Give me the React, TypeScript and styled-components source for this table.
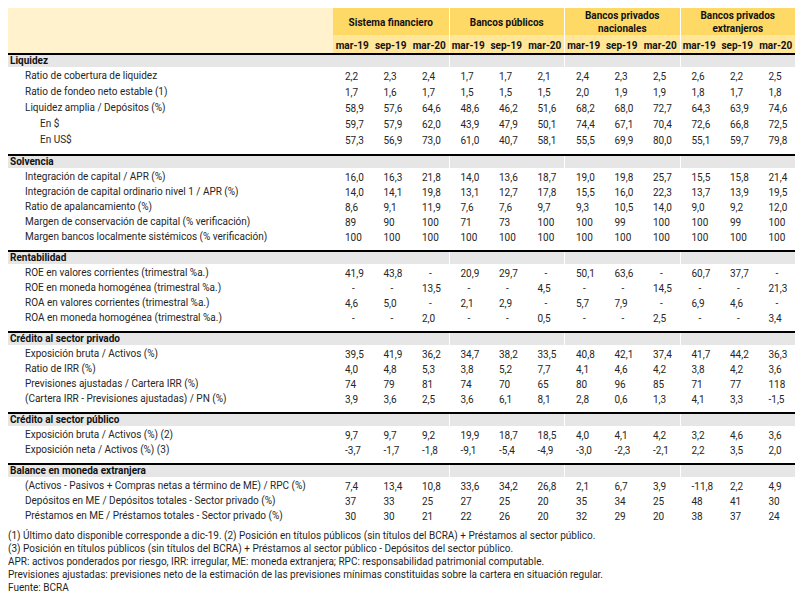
import React from 'react';
import styled, { createGlobalStyle } from 'styled-components';

const GROUPS = [
  'Sistema financiero',
  'Bancos públicos',
  'Bancos privados nacionales',
  'Bancos privados extranjeros',
];
const DATES = ['mar-19', 'sep-19', 'mar-20'];

type Row = { label: string; values: string; indent?: number };
type Block = { title: string; rows: Row[]; rowHeight?: number };

// values: 12 per row, space separated (3 dates x 4 groups)
const BLOCKS: Block[] = [
  {
    title: 'Liquidez',
    rowHeight: 16,
    rows: [
      { label: 'Ratio de cobertura de liquidez', values: '2,2 2,3 2,4 1,7 1,7 2,1 2,4 2,3 2,5 2,6 2,2 2,5' },
      { label: 'Ratio de fondeo neto estable (1)', values: '1,7 1,6 1,7 1,5 1,5 1,5 2,0 1,9 1,9 1,8 1,7 1,8' },
      { label: 'Liquidez amplia / Depósitos (%)', values: '58,9 57,6 64,6 48,6 46,2 51,6 68,2 68,0 72,7 64,3 63,9 74,6' },
      { label: 'En $', indent: 2, values: '59,7 57,9 62,0 43,9 47,9 50,1 74,4 67,1 70,4 72,6 66,8 72,5' },
      { label: 'En US$', indent: 2, values: '57,3 56,9 73,0 61,0 40,7 58,1 55,5 69,9 80,0 55,1 59,7 79,8' },
    ],
  },
  {
    title: 'Solvencia',
    rows: [
      { label: 'Integración de capital / APR (%)', values: '16,0 16,3 21,8 14,0 13,6 18,7 19,0 19,8 25,7 15,5 15,8 21,4' },
      { label: 'Integración de capital ordinario nivel 1 / APR (%)', values: '14,0 14,1 19,8 13,1 12,7 17,8 15,5 16,0 22,3 13,7 13,9 19,5' },
      { label: 'Ratio de apalancamiento (%)', values: '8,6 9,1 11,9 7,6 7,6 9,7 9,3 10,5 14,0 9,0 9,2 12,0' },
      { label: 'Margen de conservación de capital (% verificación)', values: '89 90 100 71 73 100 100 99 100 100 99 100' },
      { label: 'Margen bancos localmente sistémicos (% verificación)', values: '100 100 100 100 100 100 100 100 100 100 100 100' },
    ],
  },
  {
    title: 'Rentabilidad',
    rows: [
      { label: 'ROE en valores corrientes (trimestral %a.)', values: '41,9 43,8 - 20,9 29,7 - 50,1 63,6 - 60,7 37,7 -' },
      { label: 'ROE en moneda homogénea (trimestral %a.)', values: '- - 13,5 - - 4,5 - - 14,5 - - 21,3' },
      { label: 'ROA en valores corrientes (trimestral %a.)', values: '4,6 5,0 - 2,1 2,9 - 5,7 7,9 - 6,9 4,6 -' },
      { label: 'ROA en moneda homogénea (trimestral %a.)', values: '- - 2,0 - - 0,5 - - 2,5 - - 3,4' },
    ],
  },
  {
    title: 'Crédito al sector privado',
    rows: [
      { label: 'Exposición bruta / Activos (%)', values: '39,5 41,9 36,2 34,7 38,2 33,5 40,8 42,1 37,4 41,7 44,2 36,3' },
      { label: 'Ratio de IRR (%)', values: '4,0 4,8 5,3 3,8 5,2 7,7 4,1 4,6 4,2 3,8 4,2 3,6' },
      { label: 'Previsiones ajustadas / Cartera IRR (%)', values: '74 79 81 74 70 65 80 96 85 71 77 118' },
      { label: '(Cartera IRR - Previsiones ajustadas) / PN (%)', values: '3,9 3,6 2,5 3,6 6,1 8,1 2,8 0,6 1,3 4,1 3,3 -1,5' },
    ],
  },
  {
    title: 'Crédito al sector público',
    rows: [
      { label: 'Exposición bruta / Activos (%) (2)', values: '9,7 9,7 9,2 19,9 18,7 18,5 4,0 4,1 4,2 3,2 4,6 3,6' },
      { label: 'Exposición neta / Activos (%) (3)', values: '-3,7 -1,7 -1,8 -9,1 -5,4 -4,9 -3,0 -2,3 -2,1 2,2 3,5 2,0' },
    ],
  },
  {
    title: 'Balance en moneda extranjera',
    rows: [
      { label: '(Activos - Pasivos + Compras netas a término de ME) / RPC (%)', values: '7,4 13,4 10,8 33,6 34,2 26,8 2,1 6,7 3,9 -11,8 2,2 4,9' },
      { label: 'Depósitos en ME / Depósitos totales - Sector privado (%)', values: '37 33 25 27 25 20 35 34 25 48 41 30' },
      { label: 'Préstamos en ME / Préstamos totales - Sector privado (%)', values: '30 30 21 22 26 20 32 29 20 38 37 24' },
    ],
  },
];

const NOTES = [
  '(1) Último dato disponible corresponde a dic-19. (2) Posición en títulos públicos (sin títulos del BCRA) + Préstamos al sector público.',
  '(3) Posición en títulos públicos (sin títulos del BCRA) + Préstamos al sector público - Depósitos del sector público.',
  'APR: activos ponderados por riesgo, IRR: irregular, ME: moneda extranjera; RPC: responsabilidad patrimonial computable.',
  'Previsiones ajustadas: previsiones neto de la estimación de las previsiones mínimas constituidas sobre la cartera en situación regular.',
  'Fuente: BCRA',
];

const App = () => {
  return (
    <>
      <GlobalStyle />
      <Page>
        <Table>
          <Header>
            <Corner />
            {GROUPS.map((g, i) => (
              <GroupTitle key={g} $sep={i > 0}>{g}</GroupTitle>
            ))}
            {GROUPS.flatMap((g, i) =>
              DATES.map((d, j) => (
                <DateCell key={`${g}-${d}`} $sep={i > 0 && j === 0}>{d}</DateCell>
              )),
            )}
          </Header>

          {BLOCKS.map(block => (
            <Section key={block.title}>
              <SectionHead>
                <SectionTitle>{block.title}</SectionTitle>
                {GROUPS.map((g, i) => (
                  <SectionFill key={g} $sep={i > 0} />
                ))}
              </SectionHead>
              {block.rows.map(row => (
                <DataRow key={row.label} $h={block.rowHeight ?? 15}>
                  <Label $indent={row.indent ?? 1}>{row.label}</Label>
                  {row.values.split(' ').map((v, i) => (
                    <Value key={i} $dash={v === '-'}>{v}</Value>
                  ))}
                </DataRow>
              ))}
            </Section>
          ))}
        </Table>

        <Notes>
          {NOTES.map(n => (
            <Note key={n}>{n}</Note>
          ))}
        </Notes>
      </Page>
    </>
  );
};

const GlobalStyle = createGlobalStyle`
  html, body {
    margin: 0;
    background: #ffffff;
  }
  body {
    font-family: Roboto, "Liberation Sans", Arial, sans-serif;
    font-size: 10px;
    color: #1f1f1f;
  }
`;

const COLS = '325px repeat(12, 38.5px)';

const Page = styled.div`
  padding: 8px;
  display: flex;
  flex-direction: column;
`;

const Table = styled.div`
  width: 787px;
  display: flex;
  flex-direction: column;
`;

const Header = styled.div`
  display: grid;
  grid-template-columns: ${COLS};
  grid-template-rows: 27px 18px;
`;

const Corner = styled.div`
  grid-row: span 2;
  background: #fff2cc;
`;

const GroupTitle = styled.div<{ $sep: boolean }>`
  grid-column: span 3;
  background: #ffd966;
  border-left: ${p => (p.$sep ? '1px solid #ffffff' : 'none')};
  display: flex;
  align-items: center;
  justify-content: center;
  text-align: center;
  padding: 1px 14px 0;
  font-weight: 700;
  line-height: 13px;
  color: #111;
`;

const DateCell = styled.div<{ $sep: boolean }>`
  background: #ffe699;
  border-left: ${p => (p.$sep ? '1px solid #ffffff' : 'none')};
  display: flex;
  align-items: center;
  justify-content: center;
  padding-top: 3px;
  font-weight: 700;
  color: #111;
  white-space: nowrap;
`;

const Section = styled.div`
  border-top: 2px solid #000000;
  padding-bottom: 7px;
  display: flex;
  flex-direction: column;
`;

const SectionHead = styled.div`
  display: grid;
  grid-template-columns: 325px repeat(4, 115.5px);
  height: 12px;
`;

const SectionTitle = styled.div`
  background: #e6e6e6;
  padding-left: 2px;
  font-weight: 700;
  line-height: 12px;
  color: #111;
  white-space: nowrap;
`;

const SectionFill = styled.div<{ $sep: boolean }>`
  background: #e6e6e6;
  border-left: ${p => (p.$sep ? '1px solid #ffffff' : 'none')};
`;

const DataRow = styled.div<{ $h: number }>`
  display: grid;
  grid-template-columns: ${COLS};
  height: ${p => p.$h}px;
  align-items: center;
`;

const Label = styled.div<{ $indent: number }>`
  padding-left: ${p => (p.$indent === 2 ? 32 : 17)}px;
  padding-top: 1px;
  white-space: nowrap;
  color: #262626;
`;

const Value = styled.div<{ $dash: boolean }>`
  padding-left: ${p => (p.$dash ? 19 : 12)}px;
  padding-top: 3px;
  white-space: nowrap;
  color: #262626;
`;

const Notes = styled.div`
  margin-top: 0;
  display: flex;
  flex-direction: column;
`;

const Note = styled.div`
  line-height: 13px;
  white-space: nowrap;
  color: #1f1f1f;
`;

export default App;
